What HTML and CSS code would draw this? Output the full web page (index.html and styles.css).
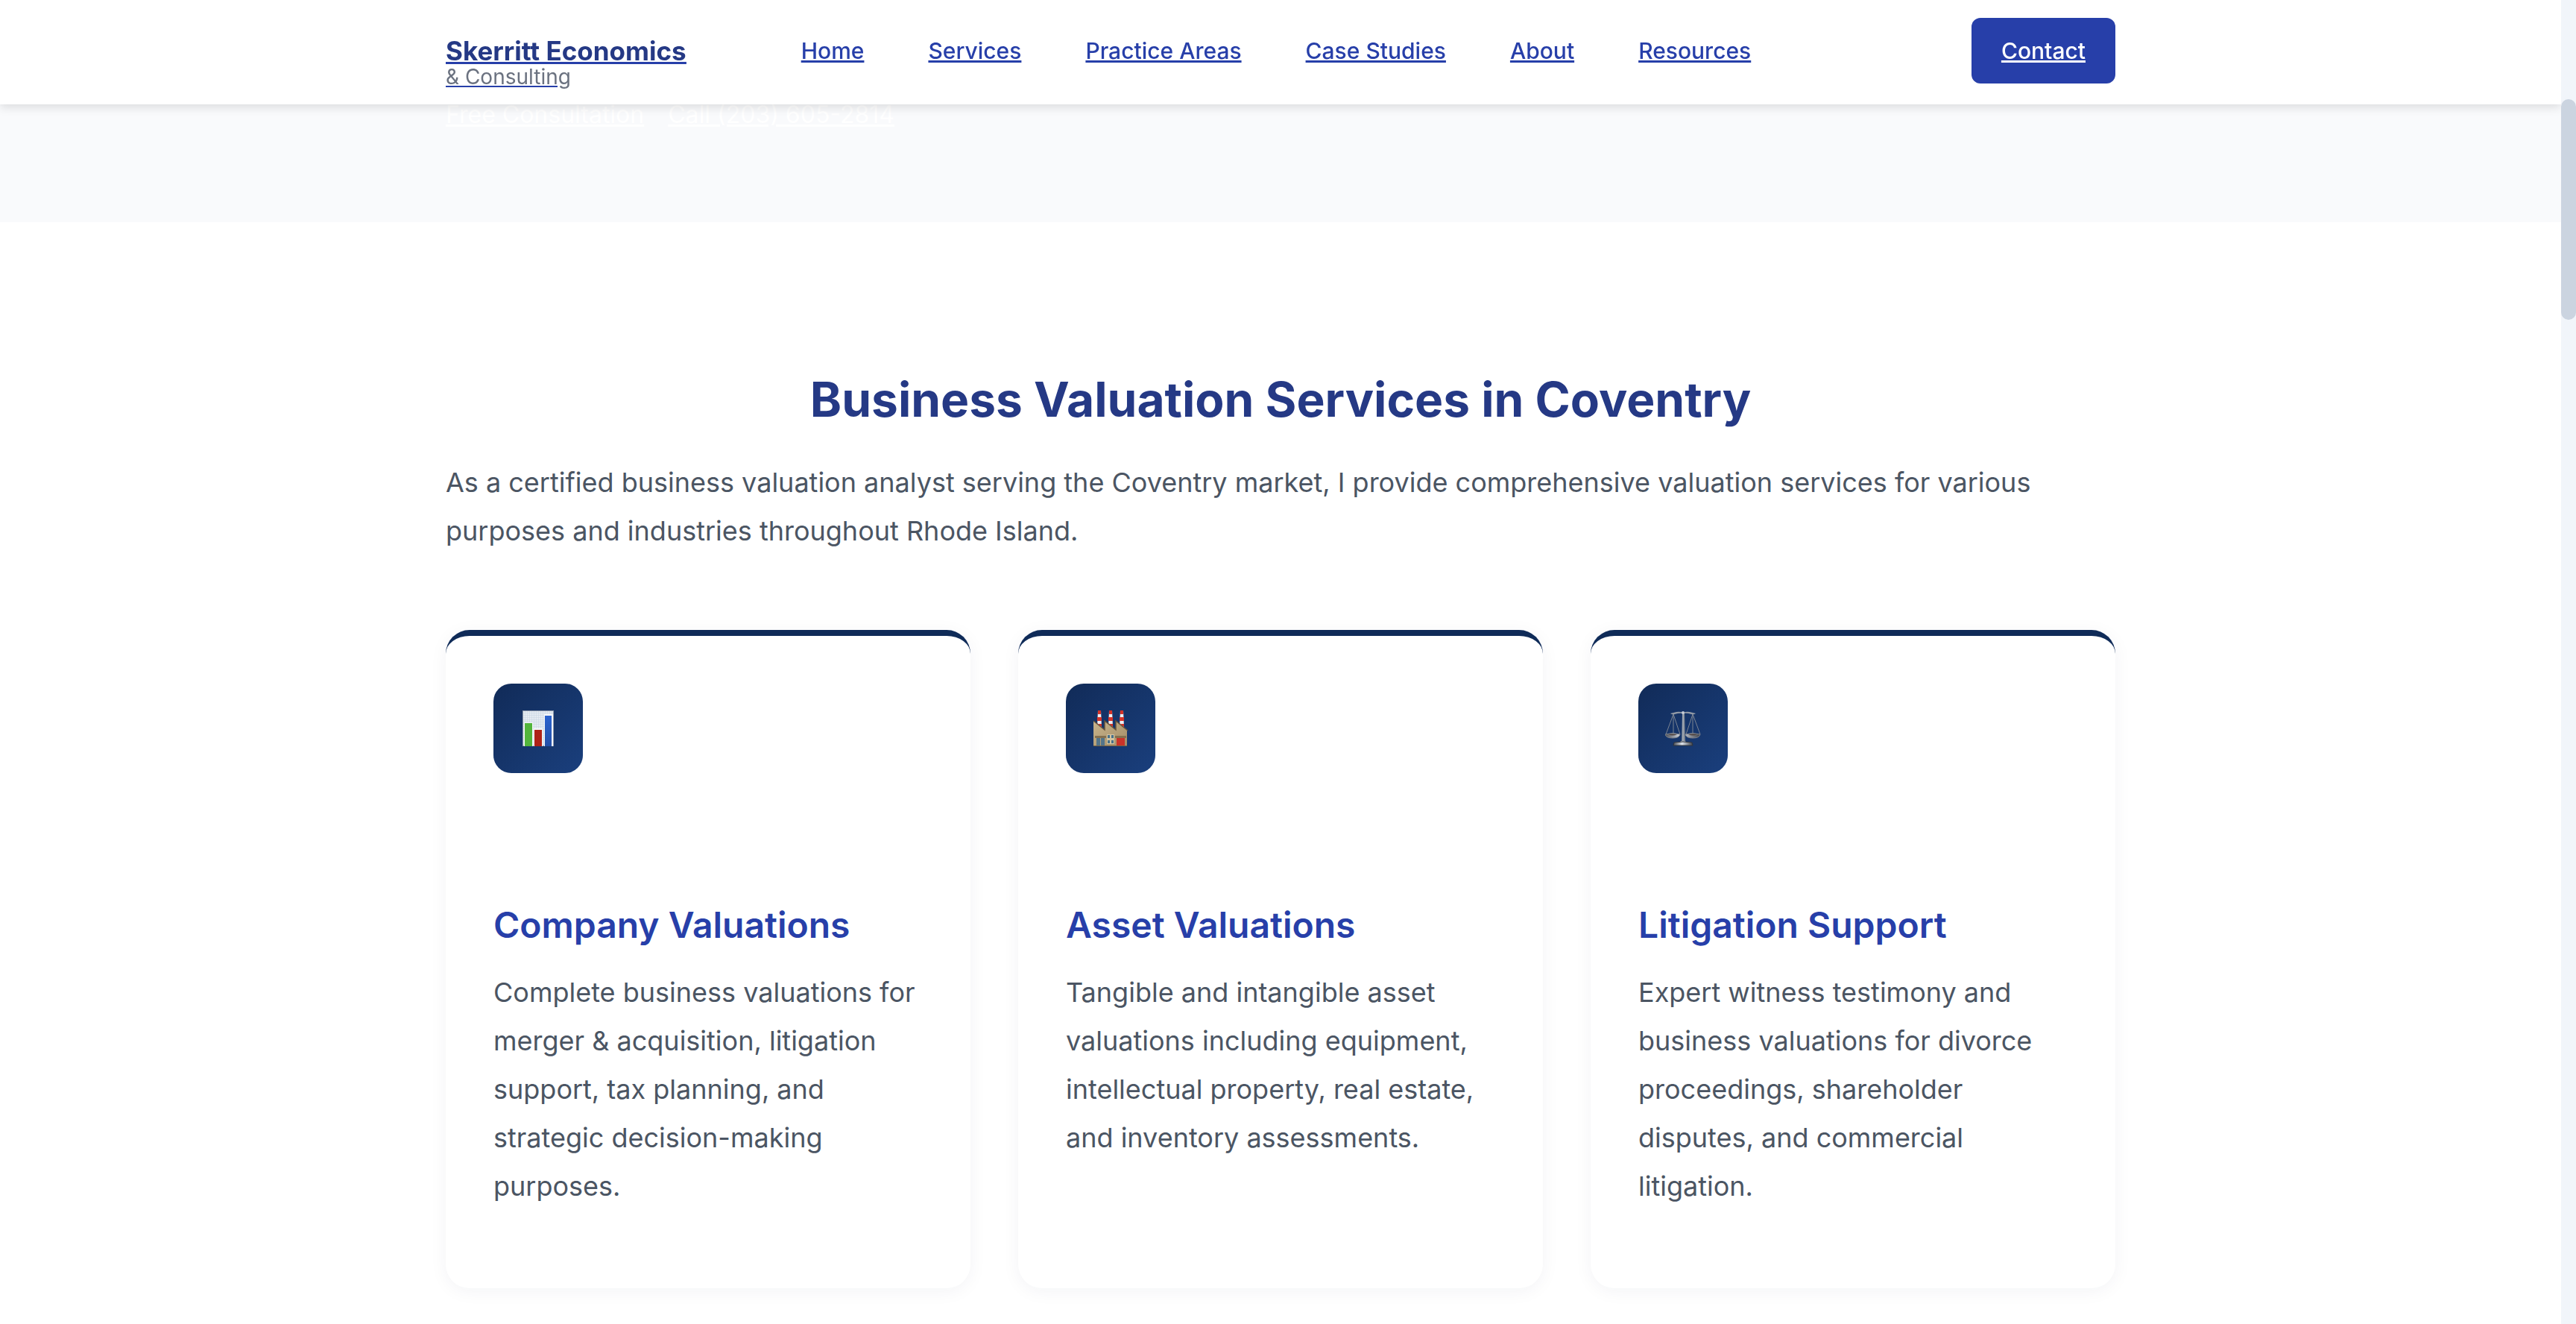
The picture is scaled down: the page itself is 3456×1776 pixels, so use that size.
FILE: index.html
```html
<!DOCTYPE html>
<html lang="en">
<head>
<meta charset="utf-8">
<meta name="viewport" content="width=device-width, initial-scale=1">
<title>Business Valuation Services in Coventry | Skerritt Economics &amp; Consulting</title>
<link rel="stylesheet" href="styles.css">
</head>
<body>
<header class="site-header">
  <div class="container header-row">
    <a class="brand" href="#home"><span class="brand-name">Skerritt Economics</span><span class="brand-sub">&amp; Consulting</span></a>
    <nav class="nav" aria-label="Main">
      <a href="#home">Home</a>
      <a href="#services">Services</a>
      <a href="#practice">Practice Areas</a>
      <a href="#cases">Case Studies</a>
      <a href="#about">About</a>
      <a href="#resources">Resources</a>
    </nav>
    <a class="contact" href="#contact">Contact</a>
  </div>
</header>
<main>
  <section class="hero">
    <div class="container hero-links">
      <a href="#consultation">Free Consultation</a>
      <a href="tel:2036052814">Call (203) 605-2814</a>
    </div>
  </section>
  <section class="services" id="services">
    <div class="container">
      <h2>Business Valuation Services in Coventry</h2>
      <p class="intro">As a certified business valuation analyst serving the Coventry market, I provide comprehensive valuation services for various purposes and industries throughout Rhode Island.</p>
      <div class="cards">
        <article class="card">
          <div class="icon">
            <svg viewBox="0 0 48 48" aria-hidden="true">
              <defs>
                <pattern id="grid" width="3" height="3" patternUnits="userSpaceOnUse"><rect width="3" height="3" fill="#e4ebf2"/><path d="M0 0H3M0 0V3" stroke="#c9d6e3" stroke-width="1"/></pattern>
                <linearGradient id="blue" x2="0" y2="1"><stop stop-color="#2a63cf"/><stop offset="1" stop-color="#2450a8"/></linearGradient>
              </defs>
              <rect x="3" y="0" width="42" height="48" fill="#8d99ab"/>
              <rect x="4" y="1" width="40" height="46" fill="url(#grid)"/>
              <path d="M5 16h12v32H5zM18 24h12v24H18zM32 5h12v43H32z" fill="#f4f7fa"/>
              <path d="M6 17h10v31H6z" fill="#52b53c"/>
              <path d="M19 26h10v22H19z" fill="#ae2318"/>
              <path d="M33 7h9v41H33z" fill="url(#blue)"/>
            </svg>
          </div>
          <h3>Company Valuations</h3>
          <p>Complete business valuations for merger &amp; acquisition, litigation support, tax planning, and strategic decision-making purposes.</p>
        </article>
        <article class="card">
          <div class="icon">
            <svg viewBox="0 0 48 48" aria-hidden="true">
              <defs>
                <linearGradient id="wall" x2="1" y2="1"><stop stop-color="#c9b48b"/><stop offset="1" stop-color="#a18c67"/></linearGradient>
                <g id="chimney"><path d="M1 0h4l1 22H0z" fill="#eeeef2"/><path d="M1 0h4v5H1zM0 9h6v5H0zM0 18h6v4l-2-1-4-4z" fill="#d5342a"/></g>
              </defs>
              <use href="#chimney" x="6"/><use href="#chimney" x="21"/><use href="#chimney" x="36"/>
              <path d="M1 14l15 12V14l15 12V14l15 12v22H1z" fill="url(#wall)"/>
              <path d="M1 14l15 12V14l15 12V14l16 13" fill="none" stroke="#65533c" stroke-width="1.5"/>
              <path d="M3 34h15v3H3zM30 34h15v3H30z" fill="#84704f"/>
              <path d="M5 37h5v10H5zM11 37h5v10h-5z" fill="#52748a"/>
              <path d="M32 37h11v10H32z" fill="#c93329"/>
              <path d="M19 32h10v13H19z" fill="#d3c39f"/>
              <path d="M20 33h3v4h-3zM25 33h3v4h-3zM20 40h3v4h-3zM25 40h3v4h-3z" fill="#47718a"/>
              <path d="M1 47h45v1H1z" fill="#756345"/>
            </svg>
          </div>
          <h3>Asset Valuations</h3>
          <p>Tangible and intangible asset valuations including equipment, intellectual property, real estate, and inventory assessments.</p>
        </article>
        <article class="card">
          <div class="icon">
            <svg viewBox="0 0 48 48" aria-hidden="true">
              <defs>
                <linearGradient id="steel"><stop stop-color="#474c55"/><stop offset=".45" stop-color="#dde3ec"/><stop offset="1" stop-color="#3c4048"/></linearGradient>
              </defs>
              <path d="M11 5L1 32M11 5v26M11 5l9 27M37 5L28 32M37 5v26M37 5l10 27" fill="none" stroke="#7b8492" stroke-width="1"/>
              <path d="M7 4q4-1 8-2 5-1 9 1 4-2 9-1 4 1 8 2-2 2-6 1-6-2-11-1-5-1-11 1-4 1-6-1z" fill="#929aa6"/>
              <path d="M23 3h3l1 39h-5z" fill="#7e8793"/>
              <path d="M24 4v38" stroke="#b9c1cc" stroke-width="1"/>
              <circle cx="24" cy="3" r="2" fill="#c5ccd6"/>
              <path d="M0 32q10-3 20 0-1 5-10 5T0 32zM27 32q10-3 20 0-1 5-10 5t-10-5z" fill="url(#steel)" stroke="#7b808b"/>
              <path d="M4 32q6-1 12 0-6 3-12 0zM31 32q6-1 12 0-6 3-12 0z" fill="#50433f"/>
              <path d="M21 41h6l2 3H19z" fill="#a6afbc"/>
              <path d="M12 43q12-2 24 0l1 4H11z" fill="url(#steel)" stroke="#30343b"/>
            </svg>
          </div>
          <h3>Litigation Support</h3>
          <p>Expert witness testimony and business valuations for divorce proceedings, shareholder disputes, and commercial litigation.</p>
        </article>
      </div>
    </div>
  </section>
</main>
<div class="scroll-track" aria-hidden="true"><div class="scroll-thumb"></div></div>
</body>
</html>
```
FILE: styles.css
```css
* {
  box-sizing: border-box;
}

body {
  margin: 0;
  padding-right: 20px;
  background: #fff;
  color: #4b5563;
  font-family: Inter, "Liberation Sans", sans-serif;
  font-size: 36px;
  line-height: 65px;
}

h2,
h3,
p {
  margin: 0;
}

a {
  color: #273fa9;
}

.container {
  max-width: 2240px;
  margin: 0 auto;
}

.site-header {
  position: fixed;
  z-index: 2;
  top: 0;
  left: 0;
  right: 20px;
  padding: 16px 0 20px;
  background: #fff;
  box-shadow: 0 4px 12px rgba(0, 0, 0, 0.12);
}

.header-row {
  display: flex;
  align-items: center;
}

.brand {
  display: flex;
  flex-direction: column;
  padding-top: 34px;
}

.brand-name {
  color: #253985;
  font-size: 35px;
  font-weight: 700;
  line-height: 36px;
  text-decoration: underline #273fa9;
}

.brand-sub {
  color: #6b7280;
  font-size: 28px;
  line-height: 34px;
  text-decoration: underline #273fa9;
}

.nav {
  display: flex;
  gap: 86px;
  margin-left: 154px;
  font-size: 30px;
  font-weight: 500;
  line-height: 48px;
}

.contact {
  margin-left: auto;
  padding: 20px 40px;
  border-radius: 12px;
  background: #273fa9;
  color: #fff;
  font-size: 30px;
  font-weight: 500;
  line-height: 48px;
}

.hero {
  padding: 130px 0 120px;
  background: #f9fafc;
}

.hero-links {
  display: flex;
  gap: 32px;
  font-size: 32px;
  line-height: 48px;
}

.hero-links a {
  color: #fff;
}

.services {
  padding: 192px 0 48px;
}

h2 {
  margin-bottom: 33px;
  color: #253985;
  font-size: 64px;
  font-weight: 700;
  line-height: 92px;
  text-align: center;
}

.cards {
  display: grid;
  grid-template-columns: repeat(3, 1fr);
  gap: 64px;
  margin-top: 100px;
}

.card {
  padding: 64px 64px 104px;
  border-top: 8px solid #0f2b58;
  border-radius: 32px;
  background: #fff;
  box-shadow: 0 4px 24px rgba(15, 43, 88, 0.05);
}

.icon {
  display: grid;
  place-items: center;
  width: 120px;
  height: 120px;
  margin-bottom: 168px;
  border-radius: 24px;
  background: linear-gradient(135deg, #112b58, #1a3f7d);
}

.icon svg {
  width: 48px;
  height: 48px;
}

h3 {
  margin-bottom: 22px;
  color: #273fa9;
  font-size: 48px;
  font-weight: 600;
  line-height: 72px;
}

.scroll-track {
  position: fixed;
  z-index: 3;
  top: 0;
  right: 0;
  bottom: 0;
  width: 20px;
  padding-top: 133px;
  background: #f1f5fa;
}

.scroll-thumb {
  height: 296px;
  border-radius: 10px;
  background: #cbd4e0;
}
```
